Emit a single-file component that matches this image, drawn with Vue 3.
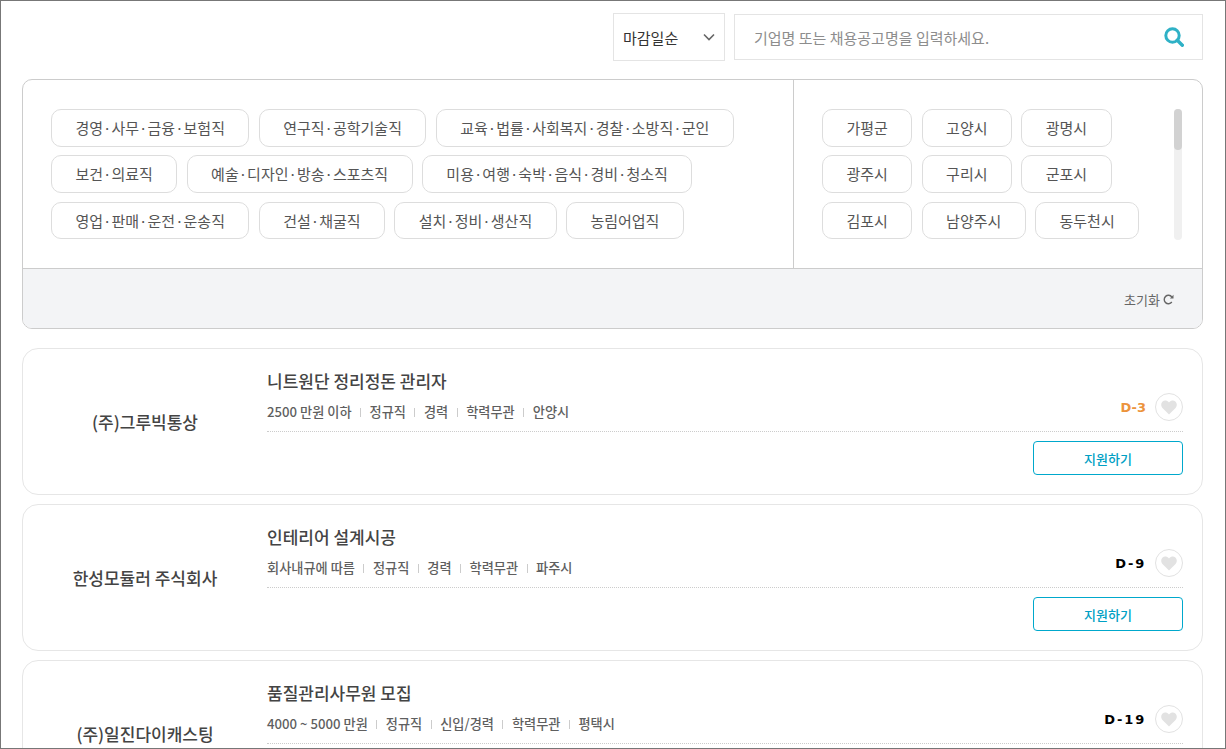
<script setup>
import { ref } from "vue";

const jobTags = ref([
  '경영·사무·금융·보험직', '연구직·공학기술직', '교육·법률·사회복지·경찰·소방직·군인',
  '보건·의료직', '예술·디자인·방송·스포츠직', '미용·여행·숙박·음식·경비·청소직',
  '영업·판매·운전·운송직', '건설·채굴직', '설치·정비·생산직', '농림어업직',
]);
const cityTags = ref(['가평군', '고양시', '광명시', '광주시', '구리시', '군포시', '김포시', '남양주시', '동두천시']);
const jobs = ref([
  { company: '(주)그루빅통상', title: '니트원단 정리정돈 관리자', meta: ['2500 만원 이하', '정규직', '경력', '학력무관', '안양시'], dday: 'D-3', soon: true },
  { company: '한성모듈러 주식회사', title: '인테리어 설계시공', meta: ['회사내규에 따름', '정규직', '경력', '학력무관', '파주시'], dday: 'D-9', soon: false },
  { company: '(주)일진다이캐스팅', title: '품질관리사무원 모집', meta: ['4000 ~ 5000 만원', '정규직', '신입/경력', '학력무관', '평택시'], dday: 'D-19', soon: false },
]);
</script>

<template>
  <div class="page">
    <div class="search-row">
      <div class="sort-select">
        <span>마감일순</span>
        <svg width="12" height="8" viewBox="0 0 12 8"><path d="M1 1.5l5 5 5-5" fill="none" stroke="#666" stroke-width="1.6" /></svg>
      </div>
      <div class="search-box">
        <span class="placeholder">기업명 또는 채용공고명을 입력하세요.</span>
        <svg width="20" height="20" viewBox="0 0 20 20"><circle cx="8.5" cy="8.5" r="6.7" fill="none" stroke="#2fb1c6" stroke-width="3" /><path d="M13.3 13.3l5 5" stroke="#2fb1c6" stroke-width="3.4" stroke-linecap="round" /></svg>
      </div>
    </div>

    <div class="filter">
      <div class="filter-body">
        <div class="filter-jobs">
          <span v-for="tag in jobTags" :key="tag" class="tag">{{ tag }}</span>
        </div>
        <div class="filter-cities">
          <div class="city-list">
            <span v-for="tag in cityTags" :key="tag" class="tag">{{ tag }}</span>
          </div>
          <div class="scrollbar"><div class="thumb"></div></div>
        </div>
      </div>
      <div class="filter-foot">
        <span>초기화</span>
        <svg width="11" height="11" viewBox="0 0 11 11"><path d="M8.8 3A4.2 4.2 0 1 0 8.8 8" fill="none" stroke="#666" stroke-width="1.4" /><path d="M10.5.8v3.6H6.9z" fill="#666" /></svg>
      </div>
    </div>

    <div v-for="job in jobs" :key="job.title" class="card">
      <div class="company">{{ job.company }}</div>
      <div class="card-main">
        <div class="card-head">
          <div class="card-text">
            <div class="title">{{ job.title }}</div>
            <div class="meta">
              <template v-for="(m, i) in job.meta" :key="m">
                <i v-if="i > 0" class="sep"></i>
                <span>{{ m }}</span>
              </template>
            </div>
          </div>
          <div class="card-side">
            <span class="dday" :class="{ soon: job.soon }">{{ job.dday }}</span>
            <span class="heart">
              <svg width="16" height="15" viewBox="0 0 16 15"><path d="M8 14.6L1.7 8.3C-.4 6.2-.1 3 1.6 1.5 3.4 0 6 .2 8 2.5 10 .2 12.6 0 14.4 1.5c1.7 1.5 2 4.7-.1 6.8z" fill="#e2e2e2" /></svg>
            </span>
          </div>
        </div>
        <div class="card-foot">
          <button class="apply">지원하기</button>
        </div>
      </div>
    </div>
  </div>
</template>

<style scoped>
.page {
  box-sizing: border-box;
  height: 749px;
  overflow: hidden;
  border: 1px solid #777;
  padding: 12px 22px 0 21px;
  font-family: "Noto Sans CJK KR", "Noto Sans", sans-serif;
  color: #555;
}

.search-row {
  display: flex;
  justify-content: flex-end;
  align-items: center;
  gap: 9px;
  height: 48px;
}

.sort-select {
  box-sizing: border-box;
  width: 112px;
  height: 48px;
  border: 1px solid #e4e4e4;
  padding: 0 9px;
  display: flex;
  align-items: center;
  justify-content: space-between;
  font-size: 15px;
  color: #333;
}

.search-box {
  box-sizing: border-box;
  width: 469px;
  height: 46px;
  border: 1px solid #e4e4e4;
  padding: 0 18px 0 19px;
  display: flex;
  align-items: center;
  justify-content: space-between;
}

.placeholder {
  font-size: 15px;
  color: #8d8d8d;
}

.filter {
  margin-top: 18px;
  border: 1px solid #ccc;
  border-radius: 10px;
  overflow: hidden;
  height: 250px;
  box-sizing: border-box;
}

.filter-body {
  display: flex;
  height: 188px;
  border-bottom: 1px solid #ccc;
}

.filter-jobs {
  box-sizing: border-box;
  width: 771px;
  padding: 29px 28px 0;
  border-right: 1px solid #ccc;
  display: flex;
  flex-wrap: wrap;
  align-content: flex-start;
  gap: 8.9px 9.2px;
}

.filter-cities {
  flex: 1;
  display: flex;
  padding: 29px 20px 0 28px;
  justify-content: space-between;
}

.city-list {
  width: 330px;
  height: 131px;
  overflow: hidden;
  display: flex;
  flex-wrap: wrap;
  align-content: flex-start;
  gap: 8.9px 9.2px;
}

.tag {
  box-sizing: border-box;
  height: 37.5px;
  padding: 0 23.5px;
  border: 1px solid #ddd;
  border-radius: 10px;
  font-size: 15px;
  line-height: 35px;
  white-space: nowrap;
  color: #555;
}

.scrollbar {
  width: 8px;
  height: 131px;
  background: #f0f0f0;
  border-radius: 4px;
}

.thumb {
  width: 8px;
  height: 41px;
  background: #d2d2d2;
  border-radius: 4px;
}

.filter-foot {
  height: 61px;
  background: #f3f4f6;
  display: flex;
  justify-content: flex-end;
  align-items: center;
  gap: 3px;
  padding-right: 28px;
  font-size: 13px;
  color: #666;
}

.card {
  box-sizing: border-box;
  height: 147px;
  margin-top: 9px;
  border: 1px solid #e6e6e6;
  border-radius: 16px;
  display: flex;
}

.filter + .card {
  margin-top: 19px;
}

.company {
  width: 244px;
  padding-top: 60px;
  text-align: center;
  font-size: 17px;
  font-weight: 500;
  color: #444;
}

.card-main {
  flex: 1;
  margin-right: 19px;
  display: flex;
  flex-direction: column;
}

.card-head {
  height: 82px;
  border-bottom: 1px dotted #ccc;
  display: flex;
  justify-content: space-between;
}

.title {
  margin-top: 20px;
  font-size: 17px;
  font-weight: 500;
  line-height: 24px;
  color: #444;
}

.meta {
  margin-top: 10px;
  display: flex;
  align-items: center;
  gap: 8.5px;
  font-size: 13.2px;
  font-weight: 500;
  line-height: 18px;
  color: #5f5f5f;
}

.sep {
  width: 1px;
  height: 9px;
  background: #ccc;
}

.card-side {
  display: flex;
  align-items: center;
  gap: 9px;
  height: 28px;
  margin-top: 44px;
}

.dday {
  font-family: "DejaVu Sans", sans-serif;
  font-size: 13px;
  font-weight: 700;
  letter-spacing: 1.8px;
  color: #000;
}

.dday.soon {
  letter-spacing: 0;
  color: #ec933c;
}

.heart {
  box-sizing: border-box;
  width: 28px;
  height: 28px;
  border: 1px solid #e2e2e2;
  border-radius: 50%;
  display: flex;
  align-items: center;
  justify-content: center;
}

.card-foot {
  display: flex;
  justify-content: flex-end;
  padding-top: 9px;
}

.apply {
  box-sizing: border-box;
  width: 150px;
  height: 34px;
  border: 1px solid #00a8cc;
  border-radius: 4px;
  background: #fff;
  color: #00a0c4;
  font-family: inherit;
  font-size: 13px;
  font-weight: 500;
}
</style>
